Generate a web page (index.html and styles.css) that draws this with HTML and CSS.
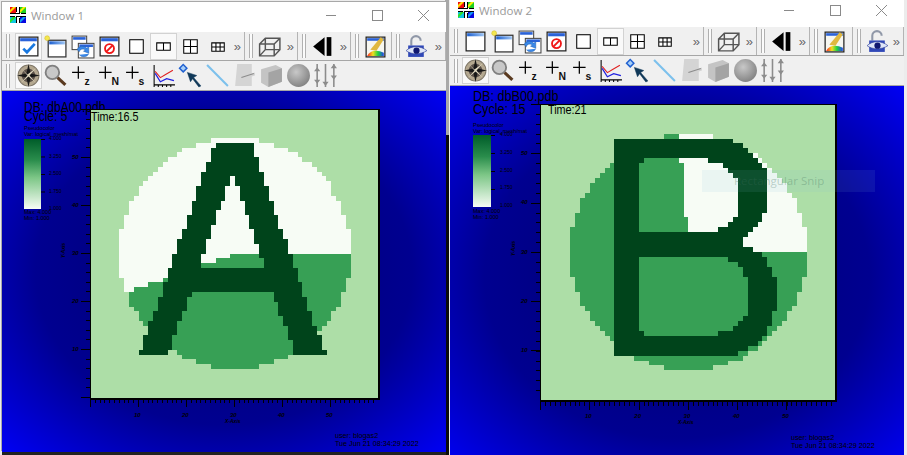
FILE: index.html
```html
<!Doctype html>
<html>
<head>
    <meta charset="UTF-8">
    <title>Window 1 / Window 2</title>
    <link rel="stylesheet" href="styles.css">
</head>
<body>
<svg class="sprite">
    <defs>
        <linearGradient id="barBlue" x1="0" x2="1" y1="0" y2="0"><stop offset="0" stop-color="#1c5fd0"/><stop offset="1" stop-color="#9cc4f4"/></linearGradient>
        <radialGradient id="ball" cx=".4" cy=".35" r=".7"><stop offset="0" stop-color="#c8c8c8"/><stop offset="1" stop-color="#808080"/></radialGradient>
        <linearGradient id="rainbow" x1="0" x2="1" y1="0" y2="0"><stop offset="0" stop-color="#ff2020"/><stop offset=".35" stop-color="#f0e020"/><stop offset=".65" stop-color="#20d040"/><stop offset="1" stop-color="#2040f0"/></linearGradient>
    </defs>
    <symbol id="appIcon" viewBox="0 0 16 16">
        <rect width="16" height="16" fill="#fff"/>
        <rect width="6" height="6" fill="#f01010"/><path d="M0 6 6 0H3L0 3z" fill="#ffe000"/>
        <rect x="10" width="6" height="6" fill="#20d020"/><path d="M10 6 16 0h-3l-3 3z" fill="#ffee00"/>
        <rect y="10" width="6" height="6" fill="#10c8e0"/><path d="M0 16 6 10H3L0 13z" fill="#30e020"/>
        <rect x="10" y="10" width="6" height="6" fill="#0808e0"/><path d="M10 16l6-6h-3l-3 3z" fill="#10a0f0"/>
        <path d="M6 0h1v5H6zM9 0h1v6H9zM0 6h10v1H0zM6 9h10v1H6zM6 10h1v6H6zM9 11h1v5H9zM0 9h5v1H0zM11 6h5v1h-5z" fill="#000"/>
    </symbol>
    <symbol id="winPlain" viewBox="0 0 24 24">
        <rect x="3" y="3" width="18" height="18" fill="#fff" stroke="#222" stroke-width="1.200"/>
        <rect x="4" y="4" width="16" height="3" fill="url(#barBlue)"/>
    </symbol>
    <symbol id="winCheck" viewBox="0 0 24 24">
        <rect x="3" y="3" width="18" height="18" fill="#fff" stroke="#222" stroke-width="1.200"/>
        <rect x="4" y="4" width="16" height="3" fill="#2a62d8"/>
        <path d="M7 14l3.500 3.500L18 9.500" fill="none" stroke="#1878e0" stroke-width="2.600"/>
    </symbol>
    <symbol id="winNew" viewBox="0 0 24 24">
        <rect x="5" y="6" width="17" height="16" fill="#fff" stroke="#333" stroke-width="1.200"/>
        <rect x="6" y="7" width="15" height="3" fill="url(#barBlue)"/>
        <circle cx="4" cy="4" r="2.300" fill="#f4e850" stroke="#d8c030" stroke-width=".6"/>
    </symbol>
    <symbol id="winCopy" viewBox="0 0 24 24">
        <rect x="2" y="2" width="14" height="13" fill="#fff" stroke="#444"/>
        <rect x="3" y="3" width="12" height="2.500" fill="#2a62d8"/>
        <rect x="8" y="9" width="15" height="14" fill="#fff" stroke="#444"/>
        <rect x="9" y="10" width="13" height="2.500" fill="#2a62d8"/>
        <path d="M7 15a5 4 0 0 1 9-1.500l2-1v6l-5-2 1.600-.8a3 2.500 0 0 0-5.600 1.300zM18 19a5 4 0 0 1-9 1" fill="#3a88e8" stroke="#2060b0" stroke-width=".5"/>
    </symbol>
    <symbol id="winStop" viewBox="0 0 24 24">
        <rect x="3" y="3" width="18" height="18" fill="#fff" stroke="#222" stroke-width="1.200"/>
        <rect x="4" y="4" width="16" height="3" fill="#2a62d8"/>
        <circle cx="12" cy="14" r="4.300" fill="none" stroke="#f01818" stroke-width="1.800"/>
        <path d="M9 17l6-6" stroke="#f01818" stroke-width="1.800"/>
    </symbol>
    <symbol id="lay1" viewBox="0 0 24 24"><rect x="5.500" y="5.500" width="13" height="13" fill="#fff" stroke="#000"/></symbol>
    <symbol id="lay2" viewBox="0 0 24 24"><path d="M5.500 8.500h13v7h-13zM12 8.500v7" fill="#fff" stroke="#000"/></symbol>
    <symbol id="lay4" viewBox="0 0 24 24"><path d="M5.500 5.500h13v13h-13zM12 5.500v13M5.500 12h13" fill="#fff" stroke="#000"/></symbol>
    <symbol id="lay6" viewBox="0 0 24 24"><path d="M6.500 8.500h12v8h-12zM10.500 8.500v8M14.500 8.500v8M6.500 12.500h12" fill="#fff" stroke="#000"/></symbol>
    <symbol id="cube" viewBox="0 0 24 24">
        <path d="M2.500 9.500 8 4h14v11l-5.500 6h-14zM2.500 9.500h14v11.500M16.500 9.500 22 4M2.500 21 8 15h14M8 4v11" fill="none" stroke="#555" stroke-width="1.400"/>
    </symbol>
    <symbol id="back" viewBox="0 0 24 24"><path d="M14 3v18L3 12z" fill="#000"/><rect x="16" y="3" width="4.500" height="18" fill="#000"/></symbol>
    <symbol id="palette" viewBox="0 0 24 24">
        <rect x="3" y="3" width="18" height="19" fill="#f6f6f0" stroke="#222" stroke-width="1.200"/>
        <rect x="4" y="4" width="16" height="2.500" fill="#2a62d8"/>
        <path d="M4 21c3-6 10-6 16-3v3z" fill="url(#rainbow)"/>
        <path d="M7 15 17 3l3 2-7 11z" fill="#e0b840"/>
    </symbol>
    <symbol id="lock" viewBox="0 0 24 24">
        <path d="M7 11V6.500a4.500 4.500 0 0 1 9 0" fill="none" stroke="#9098a8" stroke-width="2"/>
        <rect x="4" y="11" width="15" height="11" fill="#3048b8"/>
        <path d="M2 16c5-5 14-5 20 0-6 4-15 4-20 0z" fill="#dfe6f8" stroke="#2a3c98" stroke-width=".6"/>
        <circle cx="12" cy="16" r="3" fill="#101870"/>
    </symbol>
    <symbol id="compass" viewBox="0 0 24 24">
        <circle cx="12" cy="12" r="10" fill="#b4a890" stroke="#807868"/>
        <circle cx="12" cy="12" r="6.500" fill="#5a5048"/>
        <path d="M12 1 14 10 23 12 14 14 12 23 10 14 1 12 10 10z" fill="#181818"/>
        <path d="M5 5 11 11 19 5 13 12 19 19 12 13 5 19 11 12z" fill="#e0d8c0"/>
    </symbol>
    <symbol id="zoomIcon" viewBox="0 0 24 24">
        <circle cx="9" cy="9" r="6.500" fill="#c8c8c8" stroke="#808080" stroke-width="1.800"/>
        <path d="M14 14l7.500 7" stroke="#5a3a20" stroke-width="3"/>
    </symbol>
    <symbol id="curve" viewBox="0 0 24 24">
        <path d="M3 2v19h20M3 21v2M7 21v2M11 21v2M15 21v2M19 21v2" fill="none" stroke="#000"/>
        <path d="M4 8l5 6 5-3 7-4" fill="none" stroke="#e02020"/>
        <path d="M4 10l5 8 6-3 7 2" fill="none" stroke="#2020e0" stroke-width="1.200"/>
    </symbol>
    <symbol id="pick" viewBox="0 0 24 24">
        <rect x="2.500" y="2.500" width="5" height="5" fill="#a8d0f8" stroke="#2060d0" stroke-width="1.400" transform="rotate(45 5 5)"/>
        <path d="M9 9l9 3-3 2 7 8-2 1-6-8-2 3z" fill="#103858" stroke="#103858" stroke-width=".5"/>
    </symbol>
    <symbol id="lineTool" viewBox="0 0 24 24"><path d="M2 2l20 20" stroke="#7cc0ec" stroke-width="2"/></symbol>
    <symbol id="flap" viewBox="0 0 24 24">
        <path d="M5 1h14v9l3-1v3l-3 1v9H3z" fill="#d4d4d4"/><path d="M9 14l12-4" stroke="#8c8c8c"/>
    </symbol>
    <symbol id="box" viewBox="0 0 24 24">
        <path d="M2 6l14-4 6 3v13l-13 5-7-4z" fill="#c4c4c4"/><path d="M9 9 22 5v13l-13 5z" fill="#a4a4a4"/>
    </symbol>
    <symbol id="sphere" viewBox="0 0 24 24"><circle cx="12" cy="12" r="11" fill="url(#ball)"/></symbol>
    <symbol id="sliders" viewBox="0 0 24 24">
        <path d="M4 1v22M12 1v22M20 1v22" stroke="#8c8c8c" stroke-width="1.500"/>
        <path d="M1 8h6L4 4zM1 16h6l-3 4zM9 18h6l-3 4zM17 5h6l-3-4zM17 12h6l-3 4z" fill="#8c8c8c"/>
    </symbol>
</svg>

<div class="desk">

    <div class="win win-a">
        <div class="titlebar">
            <svg class="app-icon"><use href="#appIcon"/></svg>
            <span class="title">Window 1</span>
            <div class="controls">
                <span class="ctl"><i class="ctl-min"></i></span>
                <span class="ctl"><i class="ctl-max"></i></span>
                <span class="ctl"><svg class="ctl-x" viewBox="0 0 11 11"><path d="M0 0l11 11M11 0 0 11"/></svg></span>
            </div>
        </div>
        <div class="toolbar">
            <div class="group g-main">
                <i class="grip"></i>
                <span class="btn on"><svg><use href="#winCheck"/></svg></span>
                <span class="btn"><svg><use href="#winNew"/></svg></span>
                <span class="btn"><svg><use href="#winCopy"/></svg></span>
                <span class="btn"><svg><use href="#winStop"/></svg></span>
                <span class="btn"><svg><use href="#lay1"/></svg></span>
                <span class="btn on"><svg><use href="#lay2"/></svg></span>
                <span class="btn"><svg><use href="#lay4"/></svg></span>
                <span class="btn"><svg><use href="#lay6"/></svg></span>
                <span class="more">»</span>
            </div>
            <div class="group g-view">
                <i class="grip"></i>
                <span class="btn"><svg><use href="#cube"/></svg></span>
                <span class="more">»</span>
            </div>
            <div class="group g-view">
                <i class="grip"></i>
                <span class="btn"><svg><use href="#back"/></svg></span>
                <span class="more">»</span>
            </div>
            <div class="group g-pal">
                <i class="grip"></i>
                <span class="btn"><svg><use href="#palette"/></svg></span>
            </div>
            <div class="group g-last">
                <i class="grip"></i>
                <span class="btn"><svg><use href="#lock"/></svg></span>
                <span class="more">»</span>
            </div>
        </div>
        <div class="toolbar">
            <div class="group">
                <i class="grip"></i>
                <span class="btn on"><svg><use href="#compass"/></svg></span>
                <span class="btn"><svg><use href="#zoomIcon"/></svg></span>
                <span class="btn"><svg viewBox="0 0 24 24"><path class="cross" d="M2 9h12M8 3v12"/><text class="axis-letter" x="14" y="21">z</text></svg></span>
                <span class="btn"><svg viewBox="0 0 24 24"><path class="cross" d="M2 9h12M8 3v12"/><text class="axis-letter" x="14" y="21">N</text></svg></span>
                <span class="btn"><svg viewBox="0 0 24 24"><path class="cross" d="M2 9h12M8 3v12"/><text class="axis-letter" x="14" y="21">s</text></svg></span>
                <span class="btn"><svg><use href="#curve"/></svg></span>
                <span class="btn"><svg><use href="#pick"/></svg></span>
                <span class="btn"><svg><use href="#lineTool"/></svg></span>
                <span class="btn"><svg><use href="#flap"/></svg></span>
                <span class="btn"><svg><use href="#box"/></svg></span>
                <span class="btn"><svg><use href="#sphere"/></svg></span>
                <span class="btn"><svg><use href="#sliders"/></svg></span>
            </div>
        </div>
        <div class="canvas">
            <div class="db">DB: dbA00.pdb</div>
            <div class="cycle">Cycle: 5</div>
            <div class="legend-head">Pseudocolor<br>Var: logical_mesh/mat</div>
            <div class="bar"></div>
            <div class="bar-labels"><span>4.000</span><span>3.250</span><span>2.500</span><span>1.750</span><span>1.000</span></div>
            <div class="minmax">Max: 4.000<br>Min: 1.000</div>
            <div class="ticks-y"></div>
            <div class="ticks-x"></div>
            <div class="ylabels"><span>50</span><span>40</span><span>30</span><span>20</span><span>10</span></div>
            <div class="xlabels"><span>10</span><span>20</span><span>30</span><span>40</span><span>50</span></div>
            <div class="ytitle">Y-Axis</div>
            <div class="xtitle">X-Axis</div>
            <svg class="plot" viewBox="0 -3 870 873" shape-rendering="crispEdges">
                <rect y="-3" width="870" height="873" fill="#000"/>
                <rect x="3" width="861" height="864" fill="#addea7"/>
                <path fill="#37a055" d="M363 84H507V99H551V113H594V127H623V141H637V155H666V170H680V185H695V199H709V213H724V258H738V272H753V315H768V358H783V504H768V547H753V590H738V604H724V633H710V648H695V662H680V691H652V705H638V720H624V734H594V748H551V762H507V777H363V762H319V748H276V734H262V720H246V705H232V691H218V677H189V662H174V648H160V633H147V604H132V590H117V547H102V504H87V358H102V315H117V272H132V258H147V228H160V213H174V199H189V185H204V170H218V155H233V141H262V127H276V113H319V99H363Z"/>
                <path fill="#f7fcf5" d="M363 84H507V99H551V113H594V127H623V141H637V155H666V170H680V185H695V199H709V213H724V258H738V272H753V315H768V358H783V432H420V444H378V459H333V475H240V504H218V516H174V532H132V547H102V504H87V358H102V315H117V272H132V258H147V228H160V213H174V199H189V185H204V170H218V155H233V141H262V127H276V113H319V99H363Z"/>
                <path fill="#00441b" fill-rule="evenodd" d="M378 99H492V141H507V185H522V228H537V272H552V315H565V358H580V387H594V432H609V475H623V516H637V561H652V604H666V648H681V676H696V720H711V734H609V691H594V648H580V618H565V575H552V546H306V561H291V604H276V633H262V676H247V720H233V734H147V720H160V676H174V633H189V604H204V561H218V516H233V475H246V432H261V387H276V358H291V315H306V272H318V228H333V185H348V155H363V113H378ZM420 198H435V228H450V272H465V315H478V358H492V402H507V444H522V475H333V432H348V387H363V345H378V300H393V272H405V228H420Z"/>
            </svg>
            <div class="time">Time:16.5</div>
            <div class="user">user: blogas2<br>Tue Jun 21 08:34:29 2022</div>
        </div>
    </div>

    <div class="win win-b">
        <div class="titlebar">
            <svg class="app-icon"><use href="#appIcon"/></svg>
            <span class="title">Window 2</span>
            <div class="controls">
                <span class="ctl"><i class="ctl-min"></i></span>
                <span class="ctl"><i class="ctl-max"></i></span>
                <span class="ctl"><svg class="ctl-x" viewBox="0 0 11 11"><path d="M0 0l11 11M11 0 0 11"/></svg></span>
            </div>
        </div>
        <div class="toolbar">
            <div class="group g-main">
                <i class="grip"></i>
                <span class="btn"><svg><use href="#winPlain"/></svg></span>
                <span class="btn"><svg><use href="#winNew"/></svg></span>
                <span class="btn"><svg><use href="#winCopy"/></svg></span>
                <span class="btn"><svg><use href="#winStop"/></svg></span>
                <span class="btn"><svg><use href="#lay1"/></svg></span>
                <span class="btn on"><svg><use href="#lay2"/></svg></span>
                <span class="btn"><svg><use href="#lay4"/></svg></span>
                <span class="btn"><svg><use href="#lay6"/></svg></span>
                <span class="more">»</span>
            </div>
            <div class="group g-view">
                <i class="grip"></i>
                <span class="btn"><svg><use href="#cube"/></svg></span>
                <span class="more">»</span>
            </div>
            <div class="group g-view">
                <i class="grip"></i>
                <span class="btn"><svg><use href="#back"/></svg></span>
                <span class="more">»</span>
            </div>
            <div class="group g-pal">
                <i class="grip"></i>
                <span class="btn"><svg><use href="#palette"/></svg></span>
            </div>
            <div class="group g-last">
                <i class="grip"></i>
                <span class="btn"><svg><use href="#lock"/></svg></span>
                <span class="more">»</span>
            </div>
        </div>
        <div class="toolbar">
            <div class="group">
                <i class="grip"></i>
                <span class="btn on"><svg><use href="#compass"/></svg></span>
                <span class="btn"><svg><use href="#zoomIcon"/></svg></span>
                <span class="btn"><svg viewBox="0 0 24 24"><path class="cross" d="M2 9h12M8 3v12"/><text class="axis-letter" x="14" y="21">z</text></svg></span>
                <span class="btn"><svg viewBox="0 0 24 24"><path class="cross" d="M2 9h12M8 3v12"/><text class="axis-letter" x="14" y="21">N</text></svg></span>
                <span class="btn"><svg viewBox="0 0 24 24"><path class="cross" d="M2 9h12M8 3v12"/><text class="axis-letter" x="14" y="21">s</text></svg></span>
                <span class="btn"><svg><use href="#curve"/></svg></span>
                <span class="btn"><svg><use href="#pick"/></svg></span>
                <span class="btn"><svg><use href="#lineTool"/></svg></span>
                <span class="btn"><svg><use href="#flap"/></svg></span>
                <span class="btn"><svg><use href="#box"/></svg></span>
                <span class="btn"><svg><use href="#sphere"/></svg></span>
                <span class="btn"><svg><use href="#sliders"/></svg></span>
            </div>
        </div>
        <div class="canvas">
            <div class="db">DB: dbB00.pdb</div>
            <div class="cycle">Cycle: 15</div>
            <div class="legend-head">Pseudocolor<br>Var: logical_mesh/mat</div>
            <div class="bar"></div>
            <div class="bar-labels"><span>4.000</span><span>3.250</span><span>2.500</span><span>1.750</span><span>1.000</span></div>
            <div class="minmax">Max: 4.000<br>Min: 1.000</div>
            <div class="ticks-y"></div>
            <div class="ticks-x"></div>
            <div class="ylabels"><span>50</span><span>40</span><span>30</span><span>20</span><span>10</span></div>
            <div class="xlabels"><span>10</span><span>20</span><span>30</span><span>40</span><span>50</span></div>
            <div class="ytitle">Y-Axis</div>
            <div class="xtitle">X-Axis</div>
            <svg class="plot" viewBox="0 -3 891 894" shape-rendering="crispEdges">
                <rect y="-3" width="891" height="894" fill="#000"/>
                <rect x="3" width="882" height="885" fill="#addea7"/>
                <path fill="#37a055" d="M372 87H519V101H564V115H609V130H624V144H654V159H666V174H681V189H696V204H711V219H726V234H741V264H756V279H771V323H786V366H801V516H786V560H771V603H756V618H741V648H726V663H711V678H696V693H681V708H666V723H654V738H624V752H609V767H564V781H519V795H372V781H327V767H282V752H222V708H210V693H195V678H180V663H165V648H150V618H135V603H120V560H105V516H90V366H105V323H120V279H135V264H150V234H165V219H180V204H195V189H210V174H222V130H282V115H327V101H372Z"/>
                <path fill="#f7fcf5" d="M417 87H519V101H564V115H609V130H624V144H654V159H666V174H681V189H696V204H711V219H726V234H741V264H756V279H771V323H786V366H801V441H640V426H609V381H444V336H432V173H417Z"/>
                <path fill="#00441b" fill-rule="evenodd" d="M222 102H579V113H609V128H624V144H640V159H654V173H666V190H681V323H666V350H654V366H640V381H624V396H609V426H640V441H666V456H681V486H696V516H711V618H696V663H681V693H666V708H654V723H624V738H594V752H222ZM312 159H504V173H549V190H564V204H579V219H594V336H579V350H564V366H534V381H297V173H312ZM297 456H564V471H594V486H609V516H624V633H609V648H594V663H579V678H534V693H312V678H297Z"/>
            </svg>
            <div class="time">Time:21</div>
            <div class="user">user: blogas2<br>Tue Jun 21 08:34:29 2022</div>
        </div>
    </div>

    <div class="snip">Rectangular Snip</div>
</div>
</body>
</html>
```
FILE: styles.css
```css
body{
    margin: 0;
    overflow: hidden;
}
.sprite{
    position: absolute;
    width: 0;height: 0;
}
.desk{
    width: 907px;height: 455px;
    position: relative;
    overflow: hidden;
    background-color: #ececec;
}
.desk::before{
    content: "";
    position: absolute;
    left: 446px;top: 135px;
    width: 3px;height: 320px;
    background-color: #0a0a0a;
}
.desk::after{
    content: "";
    position: absolute;
    left: 445px;top: 0;
    width: 4px;height: 135px;
    background-color: #a8a8a8;
}

/* windows */
.win{
    position: absolute;
    display: flex;
    flex-direction: column;
    background-color: #f0f0f0;
    z-index: 1;
}
.win-a{
    left: 2px;top: 2px;
    width: 444px;height: 450px;
    box-shadow: 0 3px 0 #222, -1px -1px 0 #a8a8a8;
    --minor-y: 9.6px;--major-y: 48px;
    --minor-x: 4.8px;--major-x: 48px;
}
.win-b{
    left: 450px;top: -3px;
    width: 454px;height: 470px;
    --minor-y: 9.87px;--major-y: 49.3px;
    --minor-x: 4.93px;--major-x: 49.3px;
}
.titlebar{
    height: 30px;
    flex: none;
    box-sizing: border-box;
    padding-bottom: 4px;
    display: flex;
    align-items: center;
    background-color: #fff;
}
.app-icon{
    width: 16px;height: 16px;
    margin-left: 8px;
}
.title{
    margin-left: 5px;
    font: 11.500px "Open Sans", sans-serif;
    color: #9a9a9a;
}
.controls{
    margin-left: auto;
    display: flex;
}
.ctl{
    width: 46px;height: 26px;
    display: flex;
    align-items: center;
    justify-content: center;
}
.ctl-min{
    width: 10px;height: 1px;
    background-color: #8a8a8a;
}
.ctl-max{
    width: 9px;height: 9px;
    border: 1px solid #8a8a8a;
}
.ctl-x{
    width: 11px;height: 11px;
    stroke: #8a8a8a;
    fill: none;
}

/* toolbars */
.toolbar{
    height: 28px;
    flex: none;
    display: flex;
    align-items: stretch;
    background-color: #f0f0f0;
    border-bottom: 1px solid #a6a6a6;
}
.toolbar + .toolbar{
    height: 29px;
}
.group{
    display: flex;
    align-items: center;
    padding-left: 4px;
    box-sizing: border-box;
    border-right: 1px solid #b4b4b4;
}
.toolbar + .toolbar .group{
    border-right: none;
}
.win-a .g-main{width: 243px;}
.win-b .g-main{width: 254px;}
.g-view{width: 53px;}
.win-a .g-pal{width: 41px;}
.win-b .g-pal{width: 43px;}
.g-last{flex: 1;}
.grip{
    width: 2px;height: 24px;
    flex: none;
    margin-right: 5px;
    background-color: #fbfbfb;
    border-left: 1px solid #b0b0b0;
    border-right: 1px solid #b0b0b0;
}
.win-b .grip{
    margin-right: 4px;
}
.group + .group .grip{
    margin-right: 3px;
}
.btn{
    width: 27px;height: 27px;
    flex: none;
    box-sizing: border-box;
    display: flex;
    align-items: center;
    justify-content: center;
}
.btn svg{
    width: 25px;height: 25px;
    flex: none;
}
.btn.on{
    background-color: #f9f9f9;
    border: 1px solid #d2d2d2;
}
.more{
    margin-left: auto;
    margin-right: 3px;
    font: 13px "Liberation Sans", sans-serif;
    color: #666;
}
.cross{
    stroke: #000;
    stroke-width: 1.200;
    fill: none;
}
.axis-letter{
    font: bold 10px "Liberation Sans", sans-serif;
    fill: #111;
}

/* vis area */
.canvas{
    flex: 1;
    position: relative;
    overflow: hidden;
    background: radial-gradient(ellipse farthest-corner at center, #00006e 0%, #000090 60%, #0000f4 100%);
    font-family: "Liberation Sans", sans-serif;
    color: #000;
}
.canvas > *{
    position: absolute;
}
.db,.cycle{
    font-size: 12px;
    line-height: 14px;
    white-space: nowrap;
    transform: scale(1,1.15);
    transform-origin: left top;
}
.win-b .db,.win-b .cycle{
    font-size: 12.600px;
}
.time{
    font-size: 10.800px;
    line-height: 13px;
    white-space: nowrap;
    transform: scale(1,1.25);
    transform-origin: left top;
}
.legend-head,.minmax{
    font-size: 5.500px;
    line-height: 5.500px;
    white-space: nowrap;
}
.bar{
    background: linear-gradient(to bottom, #005c2a 0%, #2a8d4c 30%, #7cc686 55%, #f7fcf5 100%);
}
.bar::after{
    content: "";
    position: absolute;
    left: 100%;top: 0;bottom: 0;
    width: 4px;
    background: linear-gradient(#000 0 1px, transparent 1px) 0 0/100% 25%;
}
.bar-labels{
    display: flex;
    flex-direction: column;
    justify-content: space-between;
    font-size: 5px;
    line-height: 5px;
}
.ticks-y{
    width: 9px;
    background:
        repeating-linear-gradient(to bottom, #000 0 1px, transparent 1px var(--major-y)),
        repeating-linear-gradient(to bottom, #000 0 1px, transparent 1px var(--minor-y)) right/4px 100% no-repeat;
}
.ticks-x{
    height: 8px;
    background:
        repeating-linear-gradient(to right, #000 0 1px, transparent 1px var(--major-x)),
        repeating-linear-gradient(to right, #000 0 1px, transparent 1px var(--minor-x)) top/100% 4px no-repeat;
}
.ylabels{
    display: flex;
    flex-direction: column;
    font: italic bold 6px/6px "Liberation Sans", sans-serif;
}
.ylabels span{
    height: var(--major-y);
}
.xlabels{
    display: flex;
    font: italic bold 6px/6px "Liberation Sans", sans-serif;
}
.xlabels span{
    width: var(--major-x);
}
.xtitle,.ytitle{
    font: italic bold 5px/5px "Liberation Sans", sans-serif;
    white-space: nowrap;
}
.ytitle{
    transform: rotate(-90deg);
}
.user{
    font-size: 7.200px;
    line-height: 7.500px;
    white-space: nowrap;
}

/* spots on the two canvases, counted from each canvas corner */
.win-a .db{left: 22px;top: 8px;}
.win-a .cycle{left: 22px;top: 17px;}
.win-a .time{left: 89px;top: 17px;}
.win-a .legend-head{left: 22px;top: 35px;}
.win-a .bar{left: 22px;top: 48px;width: 17px;height: 70px;}
.win-a .bar-labels{left: 47px;top: 45px;height: 75px;}
.win-a .minmax{left: 22px;top: 119px;}
.win-a .ticks-y{left: 79px;top: 18px;height: 289px;}
.win-a .ticks-x{left: 88px;top: 308px;width: 288px;}
.win-a .ylabels{left: 70px;top: 63px;}
.win-a .xlabels{left: 132px;top: 321px;}
.win-a .ytitle{left: 54px;top: 157px;}
.win-a .xtitle{left: 223px;top: 328px;}
.win-a .plot{left: 88px;top: 18px;width: 290px;height: 291px;}
.win-a .user{left: 333px;top: 341px;}

.win-b .db{left: 23px;top: 2px;}
.win-b .cycle{left: 23px;top: 15px;}
.win-b .time{left: 98px;top: 15px;}
.win-b .legend-head{left: 23px;top: 37px;}
.win-b .bar{left: 23px;top: 49px;width: 18px;height: 72px;}
.win-b .bar-labels{left: 50px;top: 46px;height: 76px;}
.win-b .minmax{left: 23px;top: 123px;}
.win-b .ticks-y{left: 81px;top: 18px;height: 296px;}
.win-b .ticks-x{left: 90px;top: 316px;width: 296px;}
.win-b .ylabels{left: 71px;top: 64px;}
.win-b .xlabels{left: 135px;top: 327px;}
.win-b .ytitle{left: 56px;top: 160px;}
.win-b .xtitle{left: 228px;top: 334px;}
.win-b .plot{left: 90px;top: 18px;width: 297px;height: 298px;}
.win-b .user{left: 341px;top: 348px;}

.snip{
    position: absolute;
    left: 702px;top: 170px;
    width: 173px;height: 22px;
    z-index: 2;
    box-sizing: border-box;
    padding-left: 32px;
    font: 11.500px/22px "Open Sans", sans-serif;
    color: rgba(60,110,90,.3);
    background-color: rgba(130,190,220,.1);
}
```
